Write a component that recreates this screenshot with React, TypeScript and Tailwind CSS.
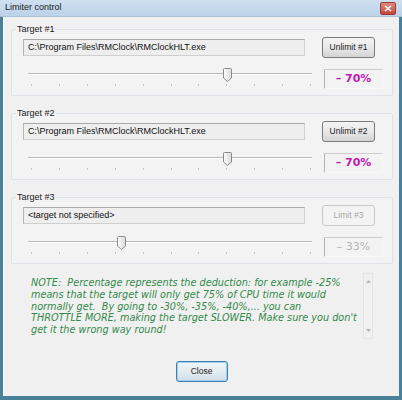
import React from "react";

const sans = { fontFamily: '"Liberation Sans", Arial, sans-serif' };

function Thumb() {
  return (
    <svg width="9" height="14" viewBox="0 0 9 14" className="block">
      <defs>
        <linearGradient id="tg" x1="0" y1="0" x2="1" y2="0">
          <stop offset="0" stopColor="#fdfdfd" />
          <stop offset="1" stopColor="#d9d9d9" />
        </linearGradient>
      </defs>
      <path d="M1.5 0.5 H7.5 Q8.5 0.5 8.5 1.5 V10 L4.5 13.5 L0.5 10 V1.5 Q0.5 0.5 1.5 0.5 Z" fill="url(#tg)" stroke="#8a8a8a" strokeWidth="1" />
    </svg>
  );
}

function Slider({ pos }: { pos: number }) {
  const ticks = Array.from({ length: 11 }, (_, i) => i);
  return (
    <div className="relative w-[292px] h-[26px]">
      <div className="absolute left-[6px] right-[2px] top-[8px] h-[2px] border-t border-[#b9b9b9] border-b border-b-white" />
      {ticks.map((i) => (
        <div
          key={i}
          className="absolute top-[19px] w-[1px] h-[2px] bg-[#c4c4c4]"
          style={{ left: 9 + i * 27.9 }}
        />
      ))}
      <div className="absolute top-[3px]" style={{ left: pos - 22 - 4 }}>
        <Thumb />
      </div>
    </div>
  );
}

function Group({
  label,
  path,
  btn,
  pct,
  pos,
  disabled,
}: {
  label: string;
  path: string;
  btn: string;
  pct: string;
  pos: number;
  disabled?: boolean;
}) {
  return (
    <fieldset className="w-[382px] h-[73px] ml-[7px] border border-[#dde3e8] rounded-[2px] px-0 pb-0 pt-0 bg-[#f3f3f3]">
      <legend className="ml-[4px] px-[1px] text-[9px] leading-[13px] text-[#1a1a1a]" style={sans}>
        {label}
      </legend>
      <div className="flex items-center mt-[1px] h-[21px]">
        <div
          className="ml-[11px] w-[282px] h-[17px] flex items-center pl-[4px] border border-[#cfcfcf] border-t-[#a9a9a9] border-l-[#b4b4b4] bg-[#eeeeee] text-[9px] text-[#111]"
          style={sans}
        >
          {path}
        </div>
        <div
          className={
            disabled
              ? "ml-[17px] w-[53px] h-[21px] flex items-center justify-center rounded-[3px] border border-[#c9c9c9] bg-[#f3f3f3] text-[8.5px] text-[#a8a8a8]"
              : "ml-[17px] w-[53px] h-[21px] flex items-center justify-center rounded-[3px] border border-[#7a7a7a] bg-gradient-to-b from-[#f4f4f4] via-[#e9e9e9] to-[#d4d4d4] text-[8.5px] text-[#1a1a1a]"
          }
          style={sans}
        >
          {btn}
        </div>
      </div>
      <div className="flex items-start mt-[7px]">
        <div className="ml-[10px]">
          <Slider pos={pos} />
        </div>
        <div
          className={
            "ml-[10px] mt-[4px] w-[59px] h-[20px] flex items-center justify-center border border-t-[#cdcdcd] border-l-[#b3b3b3] border-r-[#f8f8f8] border-b-[#f8f8f8] " +
            (disabled
              ? "text-[11px] text-[#b3b3b3]"
              : "text-[11px] font-bold text-[#c020b0]")
          }
          style={{ fontFamily: '"DejaVu Sans", Verdana, sans-serif' }}
        >
          {pct}
        </div>
      </div>
    </fieldset>
  );
}

export default function App() {
  return (
    <div className="w-[402px] h-[400px] flex flex-col bg-[#4a8198] overflow-hidden">
      <div className="h-[17px] flex items-center justify-between bg-gradient-to-b from-[#cfe0f1] to-[#bcd2e9] border-b border-[#a9c0d8] pl-[5px] pr-[6px]">
        <span className="text-[9px] text-[#1a1a1a]" style={sans}>
          Limiter control
        </span>
        <div className="w-[16px] h-[13px] rounded-[2px] bg-gradient-to-b from-[#e08a7f] to-[#c2473a] border border-[#9a3a30] flex items-center justify-center">
          <svg width="8" height="7" viewBox="0 0 8 7">
            <path d="M1 1 L7 6 M7 1 L1 6" stroke="white" strokeWidth="1.6" />
          </svg>
        </div>
      </div>
      <div className="flex-1 mx-[3px] mb-[4px] bg-[#f0f0f0] border-l border-white flex flex-col">
        <div className="mt-[6px]">
          <Group label="Target #1" path="C:\Program Files\RMClock\RMClockHLT.exe" btn="Unlimit #1" pct="– 70%" pos={227} />
        </div>
        <div className="mt-[11px]">
          <Group label="Target #2" path="C:\Program Files\RMClock\RMClockHLT.exe" btn="Unlimit #2" pct="– 70%" pos={227} />
        </div>
        <div className="mt-[11px]">
          <Group label="Target #3" path="<target not specified>" btn="Limit #3" pct="– 33%" pos={121} disabled />
        </div>
        <div className="flex mt-[13px]">
          <div
            className="ml-[27px] w-[332px] text-[9.7px] leading-[11.75px] italic text-[#328a4a] whitespace-nowrap"
            style={{ fontFamily: '"DejaVu Sans", Verdana, sans-serif' }}
          >
            NOTE:&nbsp; Percentage represents the deduction: for example -25%
            <br />
            means that the target will only get 75% of CPU time it would
            <br />
            normally get.&nbsp; By going to -30%, -35%, -40%,... you can
            <br />
            THROTTLE MORE, making the target SLOWER. Make sure you don't
            <br />
            get it the wrong way round!
          </div>
          <div className="mt-[-4px] w-[10px] h-[66px] border border-[#e4e4e4] flex flex-col items-center justify-between py-[6px]">
            <svg width="5" height="3" viewBox="0 0 5 3"><path d="M0 3 L2.5 0 L5 3 Z" fill="#b5b5b5" /></svg>
            <svg width="5" height="3" viewBox="0 0 5 3"><path d="M0 0 L2.5 3 L5 0 Z" fill="#b5b5b5" /></svg>
          </div>
        </div>
        <div className="flex justify-center mt-auto mb-[14px]">
          <div
            className="w-[52px] h-[21px] flex items-center justify-center rounded-[3px] border border-[#3d7fb0] bg-gradient-to-b from-[#f2f6f9] via-[#e4ecf2] to-[#cfdde8] text-[8.5px] text-[#1a1a1a] shadow-[inset_0_0_0_1px_#9fd0ee]"
            style={sans}
          >
            Close
          </div>
        </div>
      </div>
    </div>
  );
}
